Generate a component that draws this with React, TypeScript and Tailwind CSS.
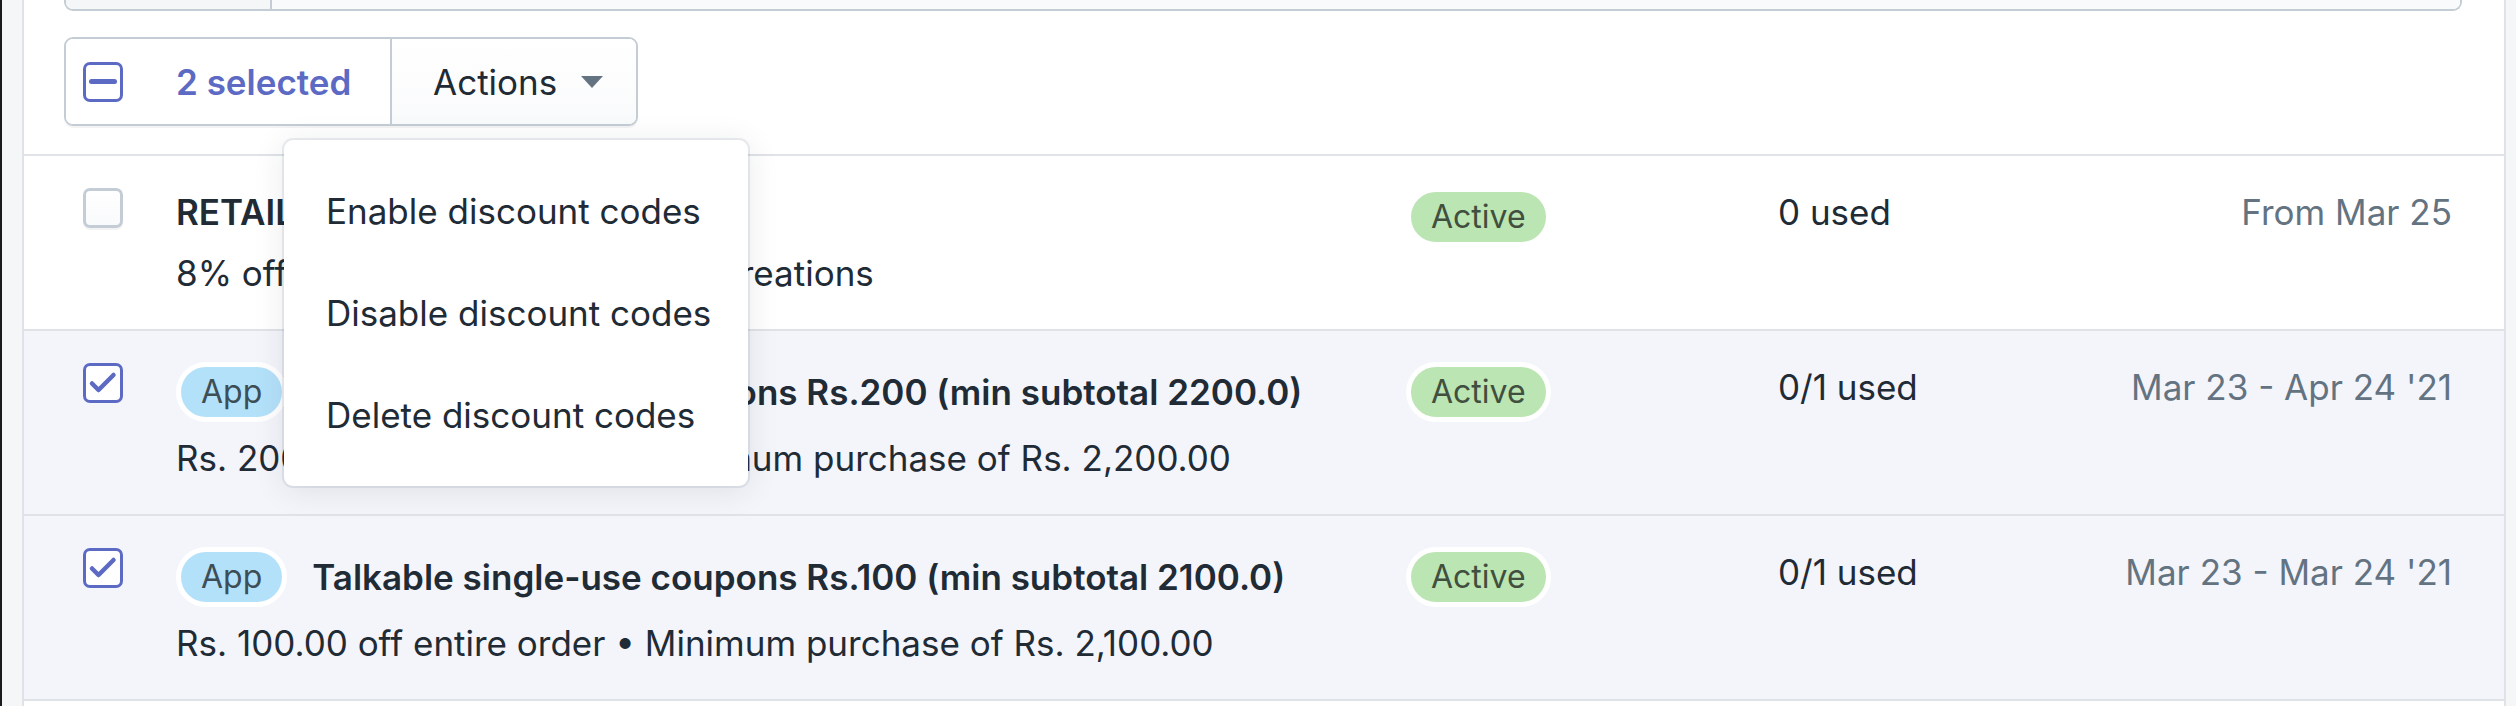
import React from 'react';

type Row = {
  selected: boolean;
  app: boolean;
  title: string;
  summary: string;
  usage: string;
  dates: string;
};

const rows: Row[] = [
  {
    selected: false,
    app: false,
    title: 'RETAILCREATIONS8',
    summary: '8% off entire order • Only Retail Creations',
    usage: '0 used',
    dates: 'From Mar 25',
  },
  {
    selected: true,
    app: true,
    title: 'Talkable single-use coupons Rs.200 (min subtotal 2200.0)',
    summary: 'Rs. 200.00 off entire order • Minimum purchase of Rs. 2,200.00',
    usage: '0/1 used',
    dates: "Mar 23 - Apr 24 '21",
  },
  {
    selected: true,
    app: true,
    title: 'Talkable single-use coupons Rs.100 (min subtotal 2100.0)',
    summary: 'Rs. 100.00 off entire order • Minimum purchase of Rs. 2,100.00',
    usage: '0/1 used',
    dates: "Mar 23 - Mar 24 '21",
  },
];

const Checkbox = ({ checked }: { checked: boolean }) =>
  checked ? (
    <div className="w-[40px] h-[40px] rounded-[7px] border-[3px] border-[#5c6ac4] bg-white flex items-center justify-center shrink-0">
      <svg width="34" height="34" viewBox="0 0 34 34" fill="none">
        <path d="M6 17.5 L12.5 24 L27.5 9" stroke="#5c6ac4" strokeWidth="4.5" strokeLinecap="round" strokeLinejoin="round" />
      </svg>
    </div>
  ) : (
    <div className="w-[40px] h-[40px] rounded-[7px] border-[3px] border-[#c4cdd5] bg-gradient-to-b from-white to-[#f9fafb] shadow-[0_2px_0_rgba(22,29,37,0.05)] shrink-0" />
  );

const Badge = ({ label, tone }: { label: string; tone: 'green' | 'blue' }) => (
  <span
    className={`inline-flex items-center h-[60px] px-[20px] border-[5px] border-white rounded-full text-[32px] leading-[40px] whitespace-nowrap ${
      tone === 'green' ? 'bg-[#bbe5b3] text-[#414f3e]' : 'bg-[#b4e1fa] text-[#3e4e57]'
    }`}
  >
    {label}
  </span>
);

export default function App() {
  return (
    <div className="w-[2516px] h-[706px] flex bg-[#f4f6f8] overflow-hidden font-['Inter',sans-serif] text-[#212b36] text-[35px] leading-[50px]">
      <div className="w-[2px] bg-[#1b1b1b]" />
      <div className="w-[20px]" />

      {/* Card */}
      <div className="relative w-[2484px] bg-white border-x-2 border-[#dfe3e8]">
        {/* Header: search + bulk actions */}
        <div className="px-[40px] pb-[28px] border-b-2 border-[#dfe3e8]">
          <div className="flex h-[11px] mr-[2px] border-x-2 border-b-2 border-[#c4cdd5] rounded-b-[9px] overflow-hidden">
            <div className="w-[206px] bg-[#f4f6f8] border-r-2 border-[#c4cdd5]" />
            <div className="flex-1 bg-[#f9fafb]" />
          </div>

          <div className="mt-[26px] flex w-[574px] h-[89px] border-2 border-[#c4cdd5] rounded-[9px] shadow-[0_2px_0_rgba(22,29,37,0.05)] overflow-hidden">
            <div className="flex items-center pl-[17px] w-[326px] bg-white border-r-2 border-[#c4cdd5]">
              <div className="w-[40px] h-[40px] rounded-[7px] border-[3px] border-[#5c6ac4] flex items-center justify-center">
                <div className="w-[28px] h-[5px] rounded-full bg-[#5c6ac4]" />
              </div>
              <span className="ml-[53px] font-semibold text-[#5c6ac4]">2 selected</span>
            </div>
            <div className="flex-1 flex items-center pl-[41px] bg-gradient-to-b from-white to-[#f9fafb]">
              <span>Actions</span>
              <svg className="ml-[24px]" width="22" height="12" viewBox="0 0 22 12">
                <path d="M0 0 H22 L11 12 Z" fill="#637381" />
              </svg>
            </div>
          </div>
        </div>

        {/* Rows */}
        {rows.map((row, i) => (
          <div
            key={i}
            className={`flex items-start pl-[59px] pr-[52px] pt-[31px] pb-[31px] border-b-2 border-[#dfe3e8] ${
              row.selected ? 'bg-[#f4f5fa]' : 'bg-white'
            }`}
          >
            <div className="pt-[1px]">
              <Checkbox checked={row.selected} />
            </div>
            <div className="ml-[53px] flex-1 min-w-0">
              <div className={`flex items-center ${row.app ? 'h-[60px]' : 'h-[50px]'}`}>
                {row.app && (
                  <span className="mr-[25px]">
                    <Badge label="App" tone="blue" />
                  </span>
                )}
                <span className="font-semibold whitespace-nowrap">{row.title}</span>
              </div>
              <div className="mt-[11px] whitespace-nowrap">{row.summary}</div>
            </div>
            <div className="w-[372px]">
              <Badge label="Active" tone="green" />
            </div>
            <div className="w-[300px] whitespace-nowrap">{row.usage}</div>
            <div className="w-[374px] text-right text-[#637381] whitespace-nowrap">{row.dates}</div>
          </div>
        ))}

        {/* Actions popover */}
        <div className="absolute left-[260px] top-[140px] w-[464px] py-[20px] bg-white rounded-[9px] shadow-[0_0_0_2px_rgba(6,44,82,0.08),0_4px_32px_rgba(33,43,54,0.1)]">
          {['Enable discount codes', 'Disable discount codes', 'Delete discount codes'].map((label) => (
            <div key={label} className="h-[102px] flex items-center pl-[42px] whitespace-nowrap">
              {label}
            </div>
          ))}
        </div>
      </div>

      <div className="flex-1" />
    </div>
  );
}
